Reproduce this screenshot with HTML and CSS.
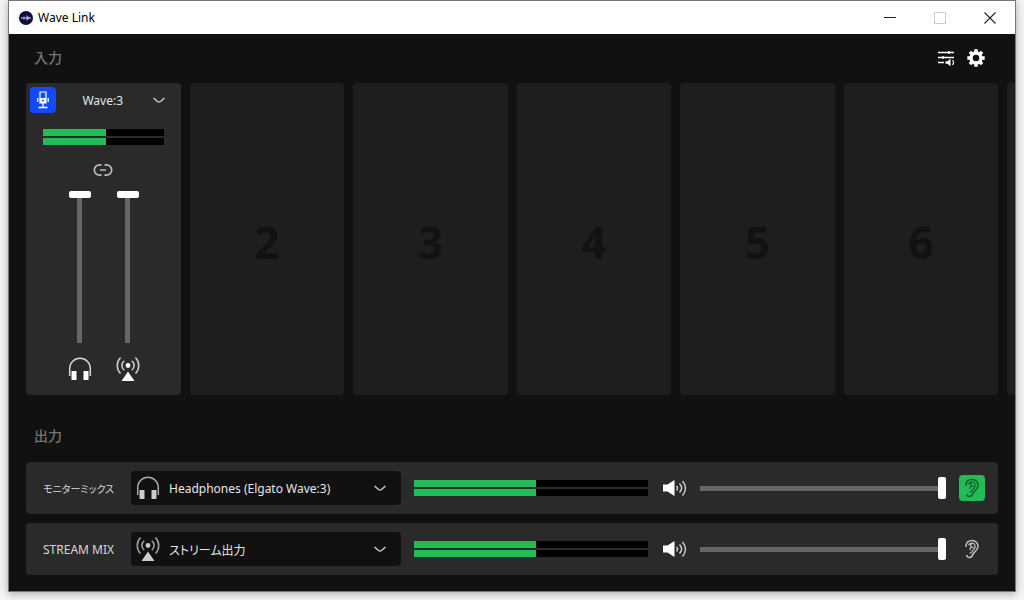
FILE: index.html
```html
<!DOCTYPE html>
<html lang="ja">
<head>
<meta charset="utf-8">
<meta name="viewport" content="width=device-width, initial-scale=1">
<title>Wave Link</title>
<link rel="stylesheet" href="styles.css">
</head>
<body>
<svg class="sprite" aria-hidden="true">
  <symbol id="headphones" viewBox="0 0 26 26">
    <path d="M2.700 20V12.500a10.300 10.300 0 0 1 20.600 0V20" fill="none" stroke="currentColor" stroke-opacity=".8" stroke-width="1.500"/>
    <rect x="4.500" y="15" width="5" height="9" rx="0.500" fill="currentColor"/>
    <rect x="16.500" y="15" width="5" height="9" rx="0.500" fill="currentColor"/>
  </symbol>
  <symbol id="broadcast" viewBox="0 0 26 26">
    <circle cx="13" cy="9.500" r="2.400" fill="currentColor"/>
    <path d="M13 15.500l6.500 9.500h-13z" fill="currentColor"/>
    <path d="M9.200 4.800a6 6 0 0 0 0 9.400M16.800 4.800a6 6 0 0 1 0 9.400M5.500 1.500a11.500 11.500 0 0 0 0 16M20.500 1.500a11.500 11.500 0 0 1 0 16" fill="none" stroke="currentColor" stroke-opacity=".75" stroke-width="1.600"/>
  </symbol>
  <symbol id="chevron" viewBox="0 0 14 8">
    <path d="M1.500 2L5.500 5.500q1.500 1 3 0L12.500 2" fill="none" stroke="currentColor" stroke-width="1.500"/>
  </symbol>
  <symbol id="speaker" viewBox="0 0 26 18">
    <path d="M2 5.500h4.500L13.500 1v16l-7-4.500H2z" fill="currentColor"/>
    <path d="M15.500 7q2 2 0 4.500M18.500 4.500q4.200 4.500 0 9M21.500 2q6 7 0 14.500" fill="none" stroke="currentColor" stroke-opacity=".75" stroke-width="1.500"/>
  </symbol>
  <symbol id="ear" viewBox="0 0 16 20">
    <path d="M2 8V6.800C2.300 3.300 5 1.500 8 1.500c3.600 0 6 2.700 6 5.800 0 4.400-4.300 5.300-5.200 8.200-.6 2-1.800 3-3.400 3-1.700 0-2.700-1.200-2.700-2.400" fill="none" stroke="currentColor" stroke-width="1.600"/>
    <path d="M4.500 6.200C5.300 4.600 6.600 4 8.200 4.200c2.100.3 3.100 1.700 2.800 3.600-.3 1.900-1.600 2.400-2.600 4.200-.7 1.300-1.100 2.300-2.800 2.100M7.800 4.500C6 6 6.500 7.500 8 8.200c-1.700.3-2.300 1.400-1.800 2.800" fill="none" stroke="currentColor" stroke-width="1.300"/>
  </symbol>
</svg>

<div class="window">
  <header class="titlebar">
    <svg class="app-icon" viewBox="0 0 14 14" aria-hidden="true"><circle cx="7" cy="7" r="7" fill="#0c0c3c"/><path d="M2 7h10" stroke="#b4b4c8" stroke-width="1.200"/><path d="M5 5.500v3" stroke="#b4b4c8" stroke-width="1"/><path d="M7.500 4.200L11 7 7.500 9.800z" fill="#b4b4c8"/></svg>
    <h1 class="app-title">Wave Link</h1>
    <button class="caption" aria-label="Minimize"><svg viewBox="0 0 12 12"><path d="M0 5.500h12" stroke="#222"/></svg></button>
    <button class="caption" aria-label="Maximize" disabled><svg viewBox="0 0 12 12"><path d="M.5.500h11v11H.5z" fill="none" stroke="#ccc"/></svg></button>
    <button class="caption" aria-label="Close"><svg viewBox="0 0 12 12"><path d="M.5.500l11 11M11.500.500l-11 11" stroke="#222" stroke-width="1.100"/></svg></button>
  </header>

  <main class="content">
    <section class="inputs">
      <div class="section-head">
        <h2 class="section-title">入力</h2>
        <button class="tool" aria-label="Mixer"><svg viewBox="0 0 18 18"><path d="M1 3.500h16M1 8.500h16M1 13.500h6" stroke="currentColor" stroke-width="1.300"/><path d="M12 2v3M6 7v3" stroke="currentColor" stroke-width="1.500"/><path d="M8.500 12.300h2l3-2.500v7.500l-3-2.500h-2z" fill="currentColor"/><path d="M15.500 11q2 2.500 0 5" fill="none" stroke="currentColor" stroke-width="1.200"/></svg></button>
        <button class="tool" aria-label="Settings"><svg viewBox="0 0 18 18"><circle cx="9" cy="9" r="5" fill="none" stroke="currentColor" stroke-width="3.400"/><path d="M9 .3v3.200M9 14.500v3.200M.3 9h3.200M14.500 9h3.200M2.900 2.900l2.200 2.200M12.900 12.900l2.200 2.200M2.900 15.100l2.200-2.200M12.900 5.100l2.200-2.200" stroke="currentColor" stroke-width="3.400"/></svg></button>
      </div>
      <div class="channels">
        <article class="channel active">
          <div class="channel-head">
            <button class="mic" aria-label="Microphone"><svg viewBox="0 0 14 18"><path d="M4 1h6v11H4z" fill="none" stroke="currentColor" stroke-width="1.200"/><path d="M4 7h6v5H4z" fill="currentColor"/><circle cx="7" cy="9.500" r="1" fill="#124bff"/><path d="M1.800 7v4M12.200 7v4M7 12v4.500M2.500 16.500h9" fill="none" stroke="currentColor" stroke-width="1.300"/></svg></button>
            <div class="picker">
              <select class="channel-select" aria-label="Channel"><option>Wave:3</option></select>
              <svg class="chevron" aria-hidden="true"><use href="#chevron"/></svg>
            </div>
          </div>
          <div class="meter" role="meter" aria-label="Input level" aria-valuenow="52">
            <div class="bar"><div class="fill" style="width:52%"></div></div>
            <div class="bar"><div class="fill" style="width:52%"></div></div>
          </div>
          <button class="link" aria-label="Link faders"><svg viewBox="0 0 20 14"><path d="M8.500 1.800H6.500a5.200 5.200 0 0 0 0 10.400h2M11.500 1.800h2a5.200 5.200 0 0 1 0 10.400h-2M7 7h6" fill="none" stroke="currentColor" stroke-width="1.700"/></svg></button>
          <div class="faders">
            <label class="fader"><input type="range" class="slider vertical" aria-label="Monitor volume" value="100"><svg class="route"><use href="#headphones"/></svg></label>
            <label class="fader"><input type="range" class="slider vertical" aria-label="Stream volume" value="100"><svg class="route"><use href="#broadcast"/></svg></label>
          </div>
        </article>
        <article class="channel">2</article>
        <article class="channel">3</article>
        <article class="channel">4</article>
        <article class="channel">5</article>
        <article class="channel">6</article>
        <article class="channel cut"></article>
      </div>
    </section>

    <section class="outputs">
      <div class="section-head"><h2 class="section-title">出力</h2></div>
      <div class="mixes">
        <div class="mix">
          <label class="mix-name kana" for="monitor">モニターミックス</label>
          <div class="picker device">
            <svg class="route" aria-hidden="true"><use href="#headphones"/></svg>
            <select class="device-select" id="monitor"><option>Headphones (Elgato Wave:3)</option></select>
            <svg class="chevron" aria-hidden="true"><use href="#chevron"/></svg>
          </div>
          <div class="meter" role="meter" aria-label="Monitor level" aria-valuenow="52">
            <div class="bar"><div class="fill" style="width:52%"></div></div>
            <div class="bar"><div class="fill" style="width:52%"></div></div>
          </div>
          <button class="speaker" aria-label="Mute monitor"><svg><use href="#speaker"/></svg></button>
          <input type="range" class="slider" aria-label="Monitor mix volume" value="100">
          <button class="ear on" aria-label="Listen to monitor mix"><svg><use href="#ear"/></svg></button>
        </div>
        <div class="mix">
          <label class="mix-name" for="stream">STREAM MIX</label>
          <div class="picker device">
            <svg class="route" aria-hidden="true"><use href="#broadcast"/></svg>
            <select class="device-select kana" id="stream"><option>ストリーム出力</option></select>
            <svg class="chevron" aria-hidden="true"><use href="#chevron"/></svg>
          </div>
          <div class="meter" role="meter" aria-label="Stream level" aria-valuenow="52">
            <div class="bar"><div class="fill" style="width:52%"></div></div>
            <div class="bar"><div class="fill" style="width:52%"></div></div>
          </div>
          <button class="speaker" aria-label="Mute stream"><svg><use href="#speaker"/></svg></button>
          <input type="range" class="slider" aria-label="Stream mix volume" value="100">
          <button class="ear" aria-label="Listen to stream mix"><svg><use href="#ear"/></svg></button>
        </div>
      </div>
    </section>
  </main>
</div>
</body>
</html>
```

FILE: styles.css
```css
* { box-sizing: border-box; }

body {
  margin: 0;
  background: #f4f4f4;
  color: #e6e6e6;
  font: 12px/16px "Noto Sans", "Noto Sans CJK JP", sans-serif;
}

button {
  display: grid;
  place-items: center;
  margin: 0;
  padding: 0;
  border: 0;
  background: none;
  color: inherit;
}

svg { display: block; }

.sprite {
  position: absolute;
  width: 0;
  height: 0;
}

.window {
  display: flex;
  flex-direction: column;
  min-height: calc(100vh - 8px);
  margin: 0 8px 8px;
  border: 1px solid #777;
  background: #111;
  box-shadow: 0 2px 8px rgba(0, 0, 0, .3);
}

.titlebar {
  display: flex;
  align-items: center;
  height: 33px;
  padding-left: 10px;
  background: #fff;
  color: #000;
}

.app-icon { width: 14px; height: 14px; }

.app-title {
  flex: 1;
  margin: 0 0 0 5px;
  font-size: 12px;
  font-weight: 400;
}

.caption { width: 50px; height: 33px; }
.caption svg { width: 12px; height: 12px; }

.content {
  flex: 1;
  display: flex;
  flex-direction: column;
  padding: 0 0 16px 17px;
  overflow: hidden;
}

.inputs {
  flex: 1;
  display: flex;
  flex-direction: column;
}

.section-head {
  display: flex;
  align-items: center;
  gap: 12px;
  height: 49px;
  padding: 0 30px 2px 8px;
}

.section-title {
  flex: 1;
  margin: 0;
  color: #757575;
  font-size: 14px;
  font-weight: 500;
}

.tool svg { width: 18px; height: 18px; }
.tool { color: #fff; }

.channels {
  flex: 1;
  display: grid;
  grid-template-columns: repeat(6, minmax(0, 1fr)) 8px;
  gap: 9px;
}

.channel {
  display: grid;
  place-items: center;
  padding-top: 6px;
  border-radius: 4px;
  background: #1e1e1e;
  color: #121212;
  font: 700 44px/60px "Open Sans", sans-serif;
}

.channel.cut { border-radius: 4px 0 0 4px; }

.channel.active {
  display: flex;
  flex-direction: column;
  align-items: stretch;
  padding: 4px 4px 13px;
  background: #2a2a2a;
  color: #e6e6e6;
  font: inherit;
}

.channel-head { display: flex; }

.mic {
  width: 26px;
  height: 26px;
  border-radius: 4px;
  background: #124bff;
  color: #fff;
}

.mic svg { width: 14px; height: 18px; }

.picker {
  position: relative;
  flex: 1;
  display: flex;
  align-items: center;
}

.picker select {
  flex: 1;
  min-width: 0;
  margin: 0;
  border: 0;
  background: none;
  color: inherit;
  font: inherit;
  appearance: none;
}

.picker .channel-select {
  height: 26px;
  padding: 2px 27px 0 0;
  text-align-last: center;
}

.chevron {
  position: absolute;
  right: 14px;
  width: 14px;
  height: 8px;
  color: #ccc;
  pointer-events: none;
}

.picker:not(.device) .chevron { right: 11px; }

.meter {
  display: grid;
  gap: 2px;
}

.channel .meter { margin: 16px 13px 0; }
.bar { height: 7px; background: #000; }
.fill { height: 100%; background: #22bb55; }

.link {
  align-self: center;
  height: 20px;
  margin-top: 15px;
  color: #bbb;
}

.link svg { width: 20px; height: 14px; }

.faders {
  flex: 1;
  display: flex;
  justify-content: center;
  gap: 22px;
  margin-top: 11px;
  padding-left: 1px;
}

.fader {
  display: flex;
  flex-direction: column;
  align-items: center;
  gap: 13px;
  color: #fff;
}

.route { width: 26px; height: 26px; }

.slider {
  width: 100%;
  min-width: 0;
  height: 22px;
  margin: 0;
  background: linear-gradient(#666, #666) center / 100% 5px no-repeat;
  appearance: none;
}

.slider::-webkit-slider-thumb {
  width: 8px;
  height: 22px;
  border-radius: 2px;
  background: #fff;
  appearance: none;
}

.slider.vertical {
  flex: 1;
  width: 22px;
  height: auto;
  background-size: 5px 100%;
  writing-mode: vertical-lr;
  direction: rtl;
}

.slider.vertical::-webkit-slider-thumb {
  width: 22px;
  height: 7px;
}

.outputs .section-head { height: 67px; padding-top: 16px; }

.mixes {
  display: grid;
  gap: 9px;
  margin-right: 17px;
}

.mix {
  display: grid;
  grid-template-columns: 75px minmax(0, 270fr) minmax(0, 234fr) 26px minmax(0, 246fr) 26px;
  align-items: center;
  gap: 13px;
  height: 52px;
  padding: 0 13px 0 17px;
  border-radius: 4px;
  background: #2a2a2a;
}

.mix-name {
  padding-top: 2px;
  color: #d8d8d8;
  white-space: nowrap;
}

.mix .kana {
  font-family: "Noto Sans CJK JP", sans-serif;
  font-size: 10px;
  font-feature-settings: "palt";
}

.device {
  gap: 8px;
  height: 34px;
  padding-left: 4px;
  border-radius: 4px;
  background: #111;
}

.device .route { color: #ccc; }

.picker .device-select {
  height: 34px;
  padding: 2px 36px 0 0;
}

.mix .device-select.kana { font-size: 12px; }

.speaker { color: #fff; }
.speaker svg { width: 26px; height: 18px; }

.ear {
  width: 26px;
  height: 26px;
  border-radius: 4px;
  color: #bbb;
}

.ear svg { width: 16px; height: 20px; }
.ear.on { background: #22bb55; color: #12632d; }
```
